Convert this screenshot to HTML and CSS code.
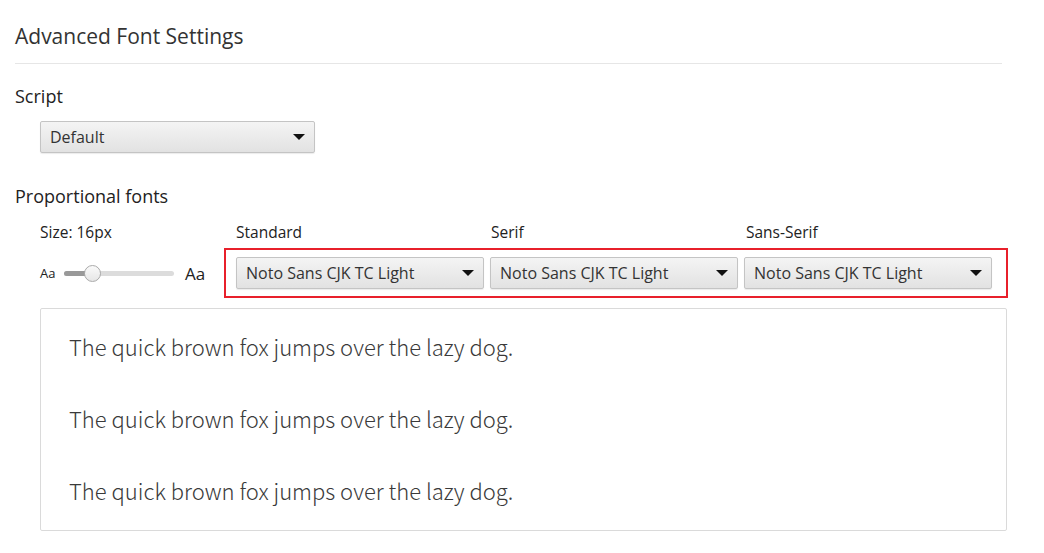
FILE: index.html
```html
<!DOCTYPE html>
<html>
    <head>
        <title>Advanced Font Settings</title>
        <link rel="stylesheet" href="styles.css">
    </head>
    <body>
        <div class="page">
            <h1 class="title">Advanced Font Settings</h1>

            <h3 class="section-label">Script</h3>
            <div class="indent">
                <div class="select select-script">
                    <span>Default</span>
                    <span class="arrow"></span>
                </div>
            </div>

            <h3 class="section-label prop-label">Proportional fonts</h3>
            <div class="indent">
                <div class="label-row">
                    <div class="size-label">Size: 16px</div>
                    <div class="col-label">Standard</div>
                    <div class="col-label">Serif</div>
                    <div class="col-label">Sans-Serif</div>
                </div>
                <div class="control-row">
                    <div class="slider-box">
                        <span class="aa-small">Aa</span>
                        <div class="slider">
                            <div class="slider-fill"></div>
                            <div class="slider-thumb"></div>
                        </div>
                        <span class="aa-big">Aa</span>
                    </div>
                    <div class="highlight">
                        <div class="select select-font">
                            <span>Noto Sans CJK TC Light</span>
                            <span class="arrow"></span>
                        </div>
                        <div class="select select-font">
                            <span>Noto Sans CJK TC Light</span>
                            <span class="arrow"></span>
                        </div>
                        <div class="select select-font">
                            <span>Noto Sans CJK TC Light</span>
                            <span class="arrow"></span>
                        </div>
                    </div>
                </div>

                <div class="preview">
                    <p>The quick brown fox jumps over the lazy dog.</p>
                    <p>The quick brown fox jumps over the lazy dog.</p>
                    <p>The quick brown fox jumps over the lazy dog.</p>
                </div>
            </div>
        </div>
    </body>
</html>
```

FILE: styles.css
```css
body {
    margin: 0;
    background: #fff;
    color: #222;
    font-family: "Open Sans", "Noto Sans", sans-serif;
}
.page {
    padding: 21px 37px 0 15px;
}
.title {
    font-size: 21px;
    font-weight: normal;
    color: #333;
    margin: 0 5px 0 0;
    padding-bottom: 12px;
    border-bottom: 1px solid #e6e6e6;
    line-height: 30px;
}
.section-label {
    font-size: 18px;
    font-weight: normal;
    margin: 20px 0 13px 0;
    line-height: 24px;
}
.prop-label {
    margin-top: 31px;
    margin-bottom: 14px;
}
.indent {
    padding-left: 25px;
}
.select {
    display: flex;
    align-items: center;
    justify-content: space-between;
    box-sizing: border-box;
    height: 32px;
    padding: 0 9px 0 9px;
    border: 1px solid #c4c4c4;
    border-radius: 2px;
    background: linear-gradient(#f4f4f4, #e2e2e2);
    box-shadow: 0 1px 1px rgba(0, 0, 0, 0.08);
    font-size: 16px;
    color: #333;
}
.select-script {
    width: 275px;
}
.arrow {
    width: 0;
    height: 0;
    border-left: 6px solid transparent;
    border-right: 6px solid transparent;
    border-top: 6px solid #111;
}
.label-row {
    display: flex;
    font-size: 15.5px;
    line-height: 20px;
    margin-bottom: 6px;
}
.size-label {
    width: 196px;
}
.col-label {
    width: 255px;
}
.control-row {
    display: flex;
    align-items: center;
}
.slider-box {
    flex-shrink: 0;
    width: 184px;
    display: flex;
    align-items: center;
}
.aa-small {
    font-size: 13px;
    width: 24px;
}
.aa-big {
    font-size: 17px;
    margin-left: 11px;
}
.slider {
    position: relative;
    width: 110px;
    height: 5px;
    border-radius: 3px;
    background: #dcdcdc;
}
.slider-fill {
    width: 30px;
    height: 5px;
    border-radius: 3px;
    background: #999;
}
.slider-thumb {
    position: absolute;
    left: 20px;
    top: -6px;
    box-sizing: border-box;
    width: 17px;
    height: 17px;
    border-radius: 50%;
    border: 1px solid #aaa;
    background: linear-gradient(#fafafa, #e6e6e6);
}
.highlight {
    flex-shrink: 0;
    display: flex;
    gap: 6px;
    padding: 7px 14px 7px 10px;
    border: 2px solid #e8202b;
}
.select-font {
    width: 248px;
}
.preview {
    margin-top: 10px;
    border: 1px solid #dadada;
    border-radius: 2px;
    padding: 1px 28px 4px 28px;
    font-family: "Noto Sans CJK TC", sans-serif;
    font-weight: 300;
    font-size: 22px;
    color: #3a3a3a;
}
.preview p {
    margin: 0;
    line-height: 72px;
}
```
